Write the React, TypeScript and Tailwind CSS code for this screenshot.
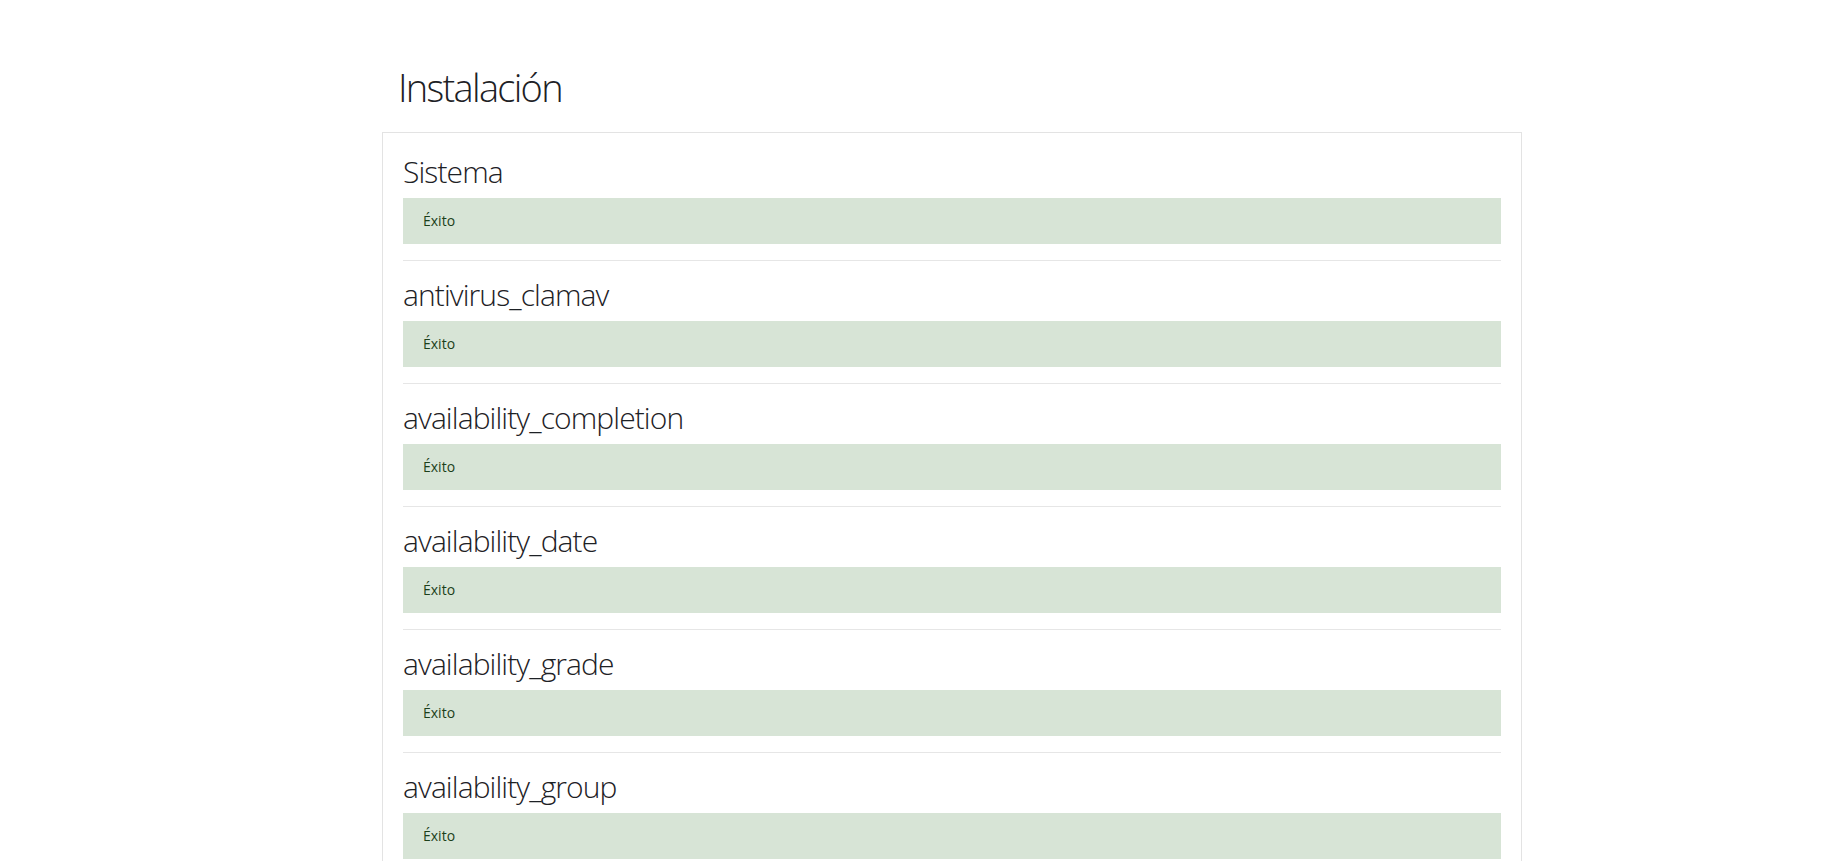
const sections = [
  "Sistema",
  "antivirus_clamav",
  "availability_completion",
  "availability_date",
  "availability_grade",
  "availability_group",
  "availability_grouping",
  "availability_profile",
]

export default function App() {
  return (
    <div className="min-h-screen bg-white font-['Open_Sans',sans-serif] text-[#1d2125]">
      <div className="ml-[382px] w-[1140px] pt-[63px]">
        <h1 className="pl-[16px] text-[38px] font-light leading-[48px] tracking-[-1.7px]">Instalación</h1>
        <div className="mt-[21px] border border-[#e3e3e3] px-5 pt-[21px]">
          {sections.map((name, i) => (
            <div key={name}>
              {i > 0 && <hr className="mb-4 border-t border-[#e6e6e6]" />}
              <h2 className="mb-2 text-[30px] font-light leading-[36px] tracking-[-0.9px]">{name}</h2>
              <div className="mb-4 bg-[#d7e4d6] px-5 py-3 text-[14px] leading-[22px] text-[#1c3f1a]">Éxito</div>
            </div>
          ))}
        </div>
      </div>
    </div>
  )
}
